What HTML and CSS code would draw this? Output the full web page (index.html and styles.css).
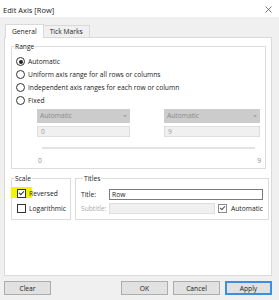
FILE: index.html
```html
<!DOCTYPE html>
<html lang="en">
<head>
    <meta charset="UTF-8">
    <title>Edit Axis [Row]</title>
    <link rel="stylesheet" href="styles.css">
</head>
<body>
    <div class="window">
        <div class="titlebar">
            <span class="title">Edit Axis [Row]</span>
            <svg class="close" width="7" height="7" viewBox="0 0 7 7"><path d="M0.5 0.5 L6.5 6.5 M6.5 0.5 L0.5 6.5" stroke="#555" stroke-width="0.8" fill="none"/></svg>
        </div>
        <div class="content">
            <div class="tabs">
                <div class="tab active">General</div>
                <div class="tab">Tick Marks</div>
            </div>
            <div class="panel">
                <fieldset class="group range">
                    <legend>Range</legend>
                    <div class="radios">
                        <div class="radio-row"><span class="radio checked"></span>Automatic</div>
                        <div class="radio-row"><span class="radio"></span>Uniform axis range for all rows or columns</div>
                        <div class="radio-row"><span class="radio"></span>Independent axis ranges for each row or column</div>
                        <div class="radio-row"><span class="radio"></span>Fixed</div>
                    </div>
                    <div class="fixed-grid">
                        <div class="dropdown">Automatic<svg width="4" height="3" viewBox="0 0 4 3"><path d="M0 0 L4 0 L2 2.5 Z" fill="#a8a8a8"/></svg></div>
                        <div class="dropdown">Automatic<svg width="4" height="3" viewBox="0 0 4 3"><path d="M0 0 L4 0 L2 2.5 Z" fill="#a8a8a8"/></svg></div>
                        <div class="field">0</div>
                        <div class="field">9</div>
                    </div>
                    <div class="slider"></div>
                    <div class="ticks">
                        <span>0</span>
                        <span>9</span>
                    </div>
                </fieldset>
                <div class="lower">
                    <fieldset class="group scale">
                        <legend>Scale</legend>
                        <div class="check-row">
                            <span class="highlight"></span>
                            <span class="check checked"></span><span class="check-text">Reversed</span>
                        </div>
                        <div class="check-row">
                            <span class="check"></span><span class="check-text">Logarithmic</span>
                        </div>
                    </fieldset>
                    <fieldset class="group titles">
                        <legend>Titles</legend>
                        <div class="title-row">
                            <span class="label">Title:</span>
                            <div class="text-input">Row</div>
                        </div>
                        <div class="title-row">
                            <span class="label disabled">Subtitle:</span>
                            <div class="text-input off"></div>
                            <span class="check soft checked"></span>Automatic
                        </div>
                    </fieldset>
                </div>
            </div>
            <div class="buttons">
                <button type="button" class="btn">Clear</button>
                <div class="spacer"></div>
                <button type="button" class="btn">OK</button>
                <button type="button" class="btn">Cancel</button>
                <button type="button" class="btn default">Apply</button>
            </div>
        </div>
    </div>
</body>
</html>
```

FILE: styles.css
```css
/* Dialog styles */
body {
    margin: 0;
    padding: 0;
    background-color: #f0f0f0;
    font-family: "Open Sans", "Noto Sans", sans-serif;
    font-size: 6.7px;
    color: #1a1a1a;
}
.window {
    width: 279px;
    height: 300px;
    overflow: hidden;
}
.titlebar {
    height: 17px;
    background-color: #fff;
    display: flex;
    align-items: center;
    padding: 0 7px 0 3px;
}
.title {
    font-size: 7.5px;
    flex: 1;
    margin-top: 2px;
}
.close {
    margin-top: 1px;
}
.content {
    padding: 7px 7px 0 4px;
}
.tabs {
    display: flex;
    align-items: flex-end;
    height: 13px;
    padding-left: 1px;
    position: relative;
    z-index: 1;
}
.tab {
    height: 11px;
    line-height: 11px;
    padding: 0 6px;
    border: 1px solid #d9d9d9;
    border-bottom: none;
    background-color: #f0f0f0;
}
.tab.active {
    height: 13px;
    line-height: 13px;
    background-color: #fff;
    padding: 0 6px 0 6px;
    margin-bottom: -1px;
}
.tab + .tab {
    border-left: none;
}
.panel {
    height: 233px;
    background-color: #fff;
    border: 1px solid #d9d9d9;
    padding: 4px 5px 0 6px;
}
.group {
    margin: 0;
    padding: 0;
    border: 1px solid #dcdcdc;
}
.group legend {
    padding: 0 1px;
    margin-left: 2px;
    line-height: 9px;
}
.radios {
    padding-top: 4px;
}
.radio-row {
    display: flex;
    align-items: center;
    height: 13px;
}
.radio {
    width: 7px;
    height: 7px;
    border: 1px solid #333;
    border-radius: 50%;
    margin: 0 3px 0 4px;
    display: flex;
    align-items: center;
    justify-content: center;
}
.radio.checked::after {
    content: "";
    width: 4px;
    height: 4px;
    border-radius: 50%;
    background-color: #222;
}
.fixed-grid {
    display: grid;
    grid-template-columns: 93px 96px;
    column-gap: 34px;
    row-gap: 3px;
    padding-left: 25px;
    margin-top: 2px;
}
.dropdown {
    height: 14px;
    line-height: 14px;
    background-color: #cccccc;
    color: #8a8a8a;
    padding: 0 3px;
    display: flex;
    justify-content: space-between;
    align-items: center;
}
.field {
    height: 9px;
    line-height: 9px;
    background-color: #f0f0f0;
    border: 1px solid #dedede;
    color: #9a9a9a;
    padding: 0 3px;
}
.slider {
    height: 2px;
    background-color: #e3e3e3;
    margin: 10px 10px 0 30px;
}
.ticks {
    display: flex;
    justify-content: space-between;
    padding: 0 4px 0 26px;
    margin-top: 7px;
    height: 9px;
    line-height: 9px;
    color: #8a8a8a;
    margin-bottom: 3px;
}
.lower {
    display: flex;
    gap: 4px;
    margin-top: 5px;
}
.scale {
    width: 58px;
    flex: none;
    padding-bottom: 3px;
}
.titles {
    flex: 1;
    padding: 0 5px 2px 5px;
}
.check-row {
    position: relative;
    display: flex;
    align-items: center;
    height: 15px;
}
.highlight {
    position: absolute;
    left: -1px;
    top: 1px;
    width: 21px;
    height: 11px;
    background-color: #f4f400;
}
.check-text {
    position: relative;
}
.check {
    position: relative;
    width: 7px;
    height: 7px;
    border: 1px solid #333;
    background-color: #fff;
    margin: 0 3px 0 5px;
    flex: none;
}
.scale .check-row:first-of-type {
    margin-top: 3px;
}
.check.checked::after {
    content: "";
    position: absolute;
    left: 2px;
    top: 0;
    width: 2px;
    height: 4px;
    border: solid #333;
    border-width: 0 1px 1px 0;
    transform: rotate(45deg);
}
.check.soft {
    border-color: #8a8a8a;
    margin: 0 4px 0 3px;
}
.check.soft.checked::after {
    border-color: #555;
}
.title-row {
    display: flex;
    align-items: center;
    height: 14px;
}
.titles .title-row:first-of-type {
    margin-top: 4px;
}
.label {
    width: 28px;
    flex: none;
}
.label.disabled {
    color: #a8a8a8;
}
.text-input {
    flex: 1;
    height: 9px;
    line-height: 9px;
    border: 1px solid #7a7a7a;
    background-color: #fff;
    padding: 0 2px;
}
.text-input.off {
    flex: none;
    width: 100px;
    background-color: #f0f0f0;
    border-color: #dedede;
}
.buttons {
    display: flex;
    gap: 5px;
    margin-top: 5px;
}
.spacer {
    flex: 1;
}
.btn {
    width: 47px;
    height: 14px;
    padding: 0;
    font-family: "Open Sans", "Noto Sans", sans-serif;
    font-size: 6.7px;
    color: #1a1a1a;
    background-color: #e1e1e1;
    border: 1px solid #adadad;
    border-radius: 0;
}
.btn.default {
    border-color: #3c8ee0;
    box-shadow: inset 0 0 0 1px #3c8ee0;
}
```
